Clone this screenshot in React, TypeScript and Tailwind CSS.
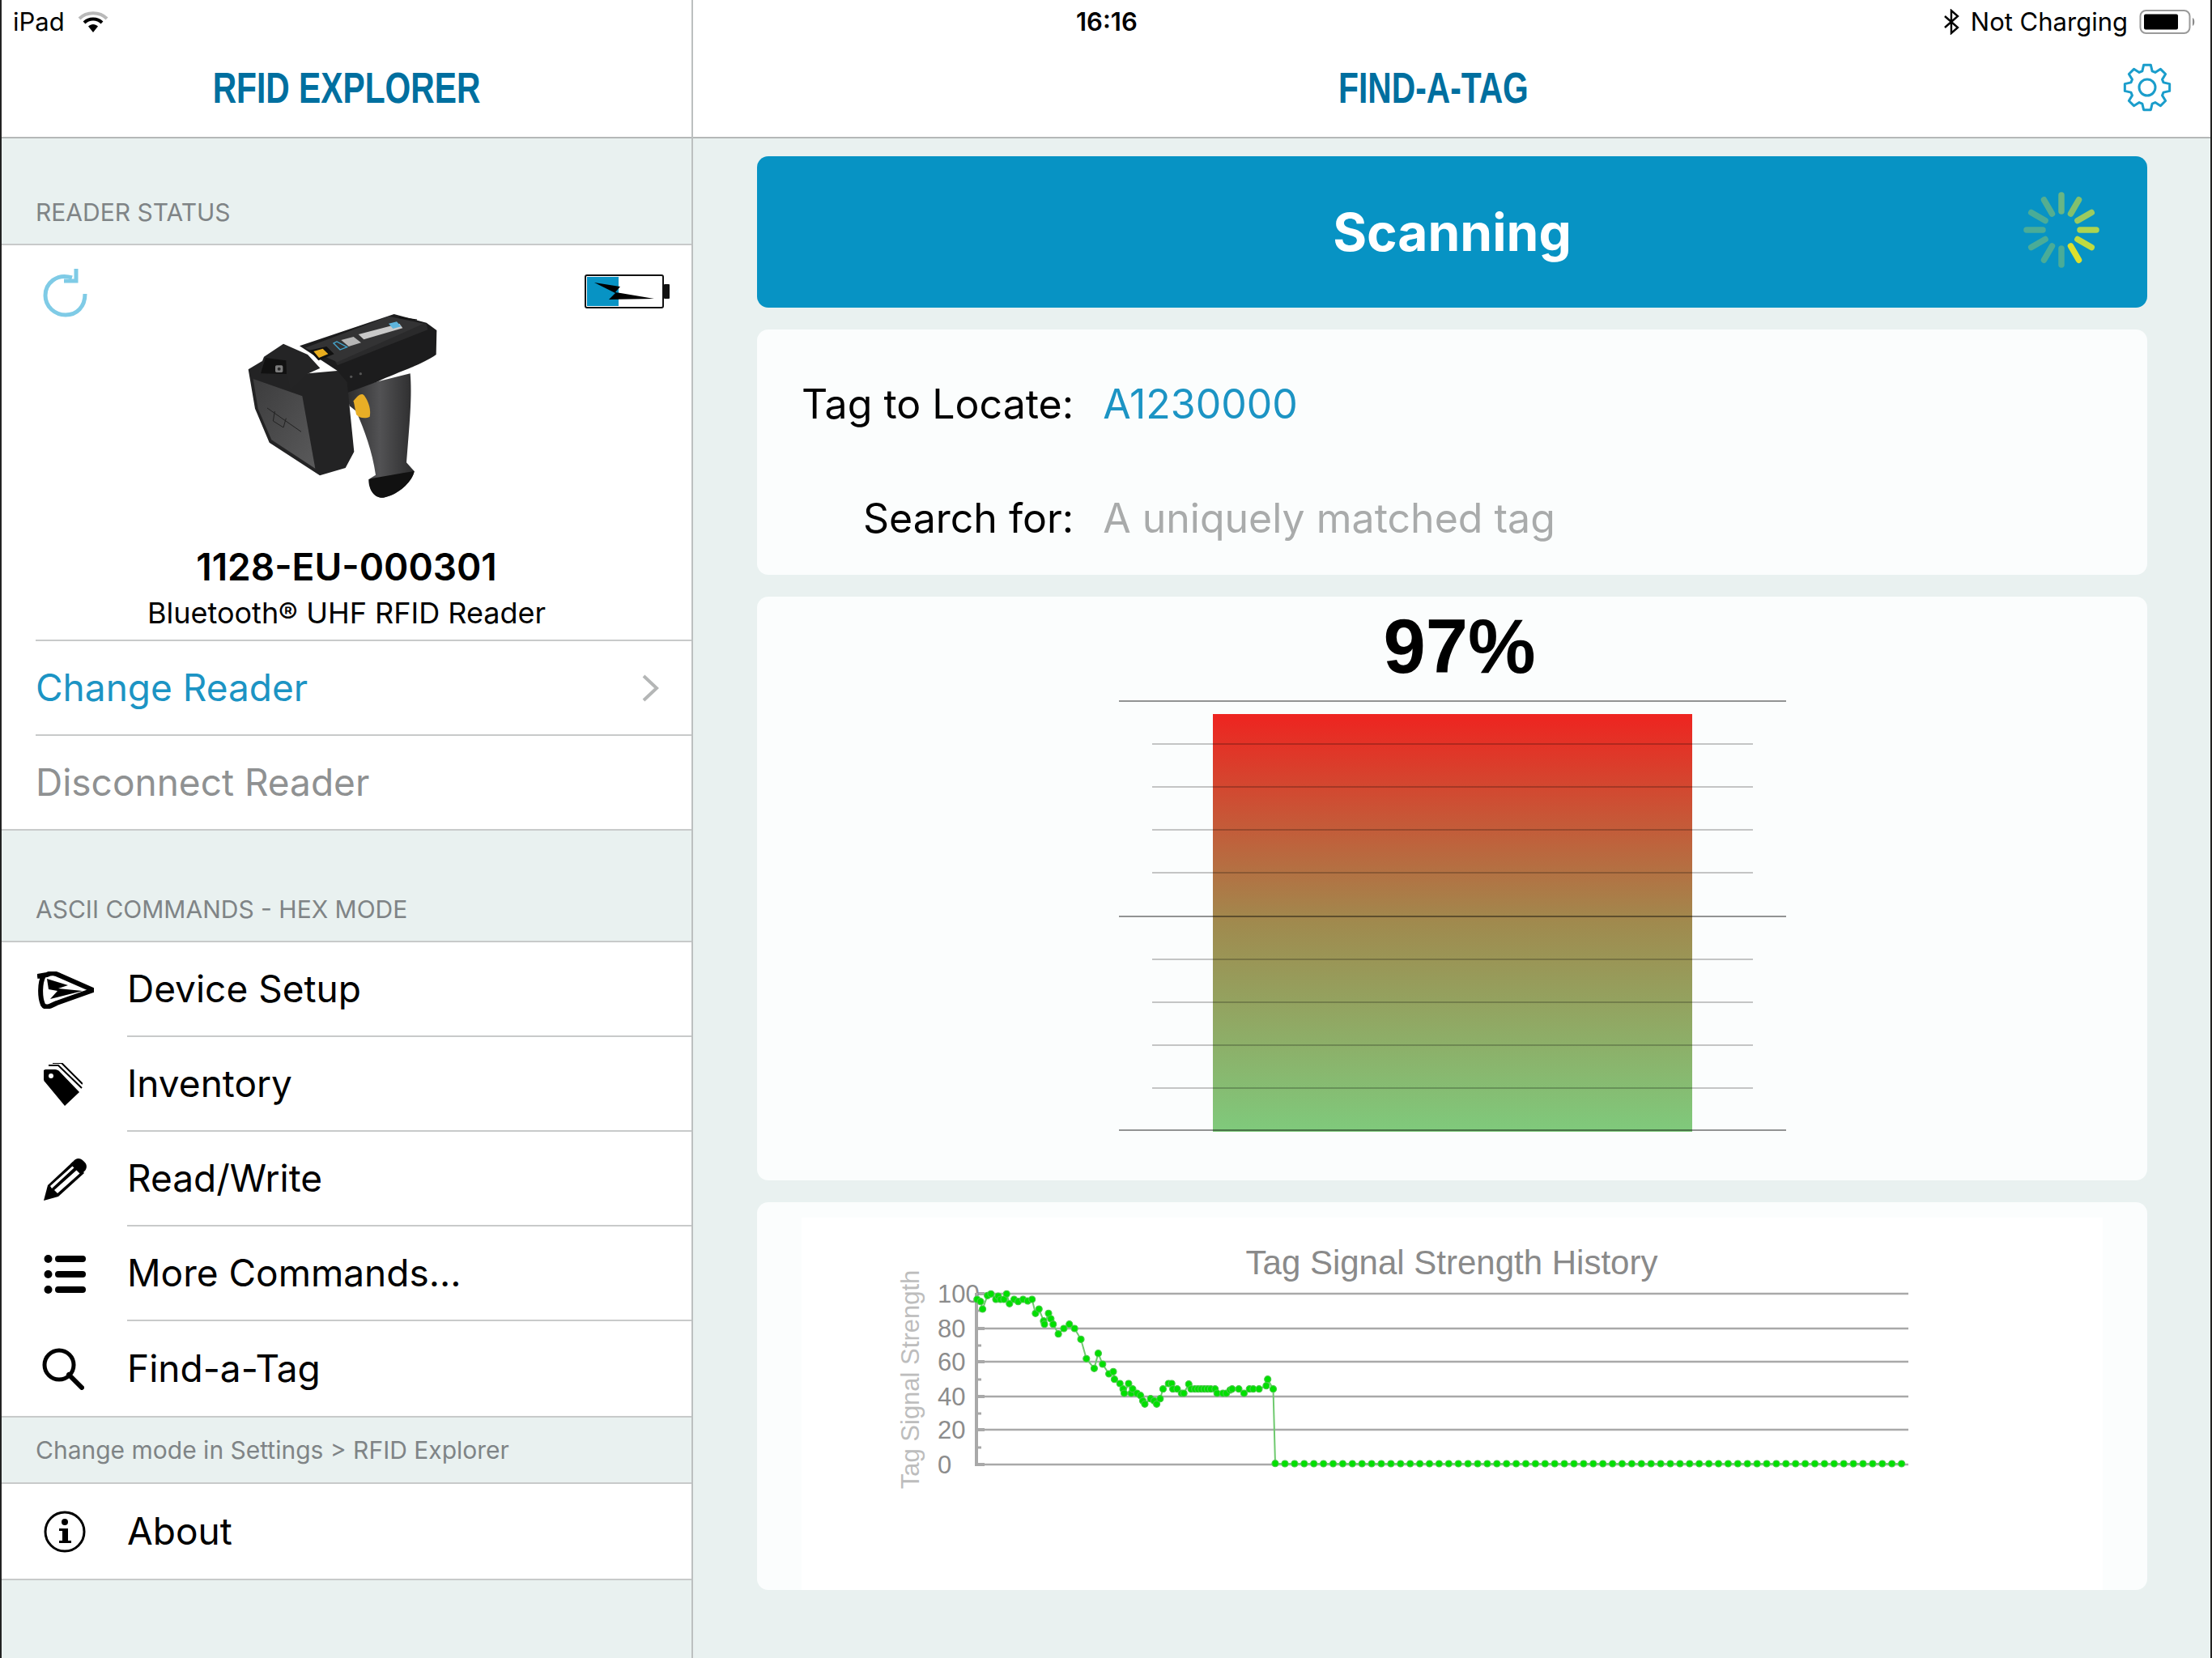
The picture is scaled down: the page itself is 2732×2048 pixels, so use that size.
const rawPoints: [number, number][] = [
  [355, 264], [367, 272], [374, 300], [391, 250], [403, 244], [420, 264], [428, 252], [436, 264], [448, 264], [457, 244],
  [467, 280], [483, 264], [497, 272], [514, 264], [530, 270], [545, 264], [557, 316], [569, 300], [585, 344], [588, 356],
  [602, 316], [610, 336], [618, 356], [636, 392], [655, 372], [674, 356], [692, 372], [714, 412], [733, 484], [760, 520],
  [774, 464], [789, 504], [811, 540], [826, 532], [830, 560], [849, 576], [860, 596], [864, 612], [879, 576], [888, 612],
  [893, 596], [908, 612], [920, 620], [928, 640], [935, 652], [955, 632], [967, 640], [976, 652], [988, 632], [998, 596],
  [1017, 576], [1028, 576], [1032, 596], [1047, 596], [1062, 612], [1070, 612], [1087, 578], [1095, 596], [1108, 596],
  [1119, 596], [1130, 596], [1141, 596], [1152, 596], [1163, 596], [1178, 596], [1185, 612], [1205, 612], [1217, 612],
  [1230, 600], [1237, 596], [1260, 596], [1278, 612], [1297, 596], [1310, 596], [1330, 596], [1355, 584], [1360, 560],
  [1379, 596], [1386, 872],
];

const signal = [
  ...rawPoints.map(([x, y]) => ({ x: 1080 + x / 2.8, y: 1520 + y / 3 })),
  ...Array.from({ length: 65 }, (_, i) => ({ x: 1587 + i * 11.9, y: 1811 })),
];

const gearPath = (() => {
  const pts: string[] = [];
  for (let i = 0; i < 8; i++) {
    const a = (i * 45 - 90) * (Math.PI / 180);
    const step = Math.PI / 180;
    const corners: [number, number][] = [
      [-17, 21],
      [-9, 28],
      [9, 28],
      [17, 21],
    ];
    corners.forEach(([d, r]) => {
      pts.push(`${(32 + r * Math.cos(a + d * step)).toFixed(2)},${(32 + r * Math.sin(a + d * step)).toFixed(2)}`);
    });
  }
  return pts.join(' ');
})();

const spinnerColors = ['#69b684', '#83c06c', '#9bcb5f', '#aed44f', '#c0da40', '#dde02d', '#4aac97', '#4aac97', '#4aac97', '#4aac97', '#4aac97', '#55ae90'];

function Wifi() {
  return (
    <svg width="38" height="28" viewBox="0 0 38 28" fill="none">
      <path d="M2 10 C11 1 27 1 36 10" stroke="#b9b9b9" strokeWidth="4" />
      <path d="M8 15 C14 9 24 9 30 15" stroke="#000" strokeWidth="4" />
      <path d="M13 19.5 C16.5 16 21.5 16 25 19.5 L19 27 Z" fill="#000" />
    </svg>
  );
}

function StatusBattery() {
  return (
    <svg width="72" height="32" viewBox="0 0 72 32" fill="none">
      <rect x="1.5" y="2" width="61" height="28" rx="7" stroke="#9a9a9a" strokeWidth="2" />
      <rect x="6" y="6.5" width="42" height="19" rx="2" fill="#000" />
      <path d="M66 11 C69 12 69 20 66 21 Z" fill="#8a8a8a" />
    </svg>
  );
}

function Gear() {
  return (
    <svg width="64" height="64" viewBox="0 0 64 64" fill="none" stroke="#1a9dcb" strokeWidth="3" strokeLinejoin="round">
      <polygon points={gearPath} />
      <circle cx="32" cy="32" r="10" />
    </svg>
  );
}

function Spinner() {
  return (
    <svg width="100" height="100" viewBox="0 0 100 100" strokeWidth="7.5" strokeLinecap="round">
      {spinnerColors.map((c, i) => (
        <line key={i} x1="50" y1="7" x2="50" y2="27" stroke={c} transform={`rotate(${i * 30} 50 50)`} />
      ))}
    </svg>
  );
}

function ReaderBattery() {
  return (
    <svg width="106" height="42" viewBox="0 0 106 42">
      <rect x="1" y="1" width="96" height="40" rx="2" fill="#fff" stroke="#111" strokeWidth="2" />
      <rect x="3" y="3" width="39" height="36" fill="#0793c4" />
      <rect x="98" y="12" width="7" height="18" rx="1" fill="#111" />
      <path d="M12 10 L44 15 L38 22 L86 30 L30 31 L38 23 Z" fill="#000" />
    </svg>
  );
}

function Scanner() {
  return (
    <svg width="320" height="270" viewBox="0 0 960 810">
      <defs>
        <linearGradient id="grip" x1="0" y1="0" x2="1" y2="0">
          <stop offset="0" stopColor="#2a2a2b" />
          <stop offset="0.5" stopColor="#525254" />
          <stop offset="1" stopColor="#2c2c2d" />
        </linearGradient>
        <linearGradient id="plate" x1="0" y1="0" x2="1" y2="1">
          <stop offset="0" stopColor="#3c3c3d" />
          <stop offset="1" stopColor="#5a5a5b" />
        </linearGradient>
      </defs>
      <path d="M500 370 L740 310 C748 400 735 520 726 640 L755 672 C750 705 700 760 640 770 C600 772 585 730 590 700 L612 686 C600 600 570 520 540 450 L515 430 Z" fill="url(#grip)" />
      <path d="M586 702 C640 690 710 680 755 672 C750 705 700 760 640 770 C600 772 585 730 586 702 Z" fill="#111" />
      <path d="M330 208 L680 90 L800 122 L838 150 L836 240 C780 280 680 310 620 340 L510 380 L500 420 L470 300 Z" fill="#1c1c1d" />
      <path d="M430 205 L680 118 L800 125 L805 148 L470 280 Z" fill="#2a2a2b" />
      <path d="M350 215 L660 98 L790 125 L470 268 Z" fill="#333334" />
      <polygon points="548,165 700,125 712,142 568,184" fill="#c9c9c9" />
      <polygon points="484,186 530,174 558,196 512,210" fill="#b5b5b5" />
      <polygon points="660,125 690,118 706,136 676,144" fill="#5eb4dc" />
      <path d="M456 198 L480 222 L506 212 L468 192 Z" fill="none" stroke="#45a7d0" strokeWidth="4" />
      <path d="M366 224 L430 210 L458 238 L400 262 Z" fill="#111" />
      <path d="M382 228 L416 218 L436 238 L402 252 Z" fill="#e8ad1e" />
      <path d="M140 295 L190 265 L360 310 L470 300 L506 342 L532 600 L500 660 L405 688 L218 566 L165 440 Z" fill="#232324" />
      <path d="M158 330 L340 394 L388 662 L226 556 L176 440 Z" fill="url(#plate)" />
      <path d="M210 438 L336 526 M238 450 L232 486 L270 510 L280 476" fill="none" stroke="#222" strokeWidth="3" />
      <path d="M178 300 L198 248 L270 200 L360 240 L406 290 L358 312 L296 372 L284 318 L182 312 Z" fill="#242425" />
      <path d="M190 296 L204 252 L280 262 L282 312 L186 310 Z" fill="#111" />
      <rect x="240" y="280" width="28" height="26" rx="5" fill="#7c7c7c" />
      <circle cx="254" cy="293" r="6" fill="#2a2a2a" />
      <path d="M530 412 C545 392 560 380 570 392 C590 420 594 450 590 470 C575 478 550 476 540 462 Z" fill="#e8ae26" />
      <circle cx="521" cy="322" r="5" fill="#555" />
      <circle cx="556" cy="311" r="5" fill="#555" />
      <rect x="698" y="100" width="68" height="4" fill="#111" transform="rotate(8 698 100)" />
    </svg>
  );
}

function DeviceSetupIcon() {
  return (
    <svg width="70" height="46" viewBox="0 0 70 46" fill="none">
      <path d="M0 6 L12 4 C18 1 22 2 28 5 L69 23 L24 39 C16 43 10 46 7 41 C3 32 3 14 8 5" stroke="#000" strokeWidth="6" strokeLinejoin="round" />
      <path d="M12 9 L38 17 L26 21 L56 24 L16 34 L25 24 L14 22 Z" fill="#000" />
    </svg>
  );
}

function TagIcon() {
  return (
    <svg width="48" height="53" viewBox="0 0 48 53" fill="none">
      <path d="M0 9 L0 20 C0 22 1 23 2 24 L26 53 L44 36 L19 10 C18 9 16 8 14 8 L2 8 Z" fill="#000" />
      <circle cx="9" cy="16" r="3" fill="#fff" />
      <path d="M6 3 L18 3 L47 31 M11 0 L22 0 L48 26" stroke="#000" strokeWidth="2" />
    </svg>
  );
}

function PencilIcon() {
  return (
    <svg width="54" height="52" viewBox="0 0 54 52">
      <path d="M0 52 L5 33 L36 4 L50 18 L18 47 Z" fill="#000" />
      <path d="M8 34 L36 9 L38 11 L10 37 Z M13 39 L41 14 L45 18 L17 43 Z" fill="#fff" />
      <path d="M36 4 C40 -1 45 -1 49 3 C54 7 54 12 50 16 L46 20 L33 7 Z" fill="#000" />
      <path d="M6 36 L15 45 L1 51 Z" fill="#000" />
    </svg>
  );
}

function ListIcon() {
  return (
    <svg width="52" height="48" viewBox="0 0 52 48" fill="#000">
      <circle cx="5.5" cy="5" r="5" />
      <circle cx="5.5" cy="24" r="5" />
      <circle cx="5.5" cy="43" r="5" />
      <rect x="14" y="1" width="38" height="8" rx="4" />
      <rect x="14" y="20" width="38" height="8" rx="4" />
      <rect x="14" y="39" width="38" height="8" rx="4" />
    </svg>
  );
}

function SearchIcon() {
  return (
    <svg width="52" height="52" viewBox="0 0 52 52" fill="none" stroke="#000">
      <circle cx="21" cy="21" r="18" strokeWidth="5" />
      <path d="M33 33 L49 49" strokeWidth="6" strokeLinecap="round" />
    </svg>
  );
}

function InfoIcon() {
  return (
    <svg width="52" height="54" viewBox="0 0 52 54" fill="none">
      <circle cx="26" cy="27" r="24" stroke="#000" strokeWidth="3" />
      <circle cx="26" cy="15" r="4" fill="#000" />
      <path d="M19 23 L30 23 L30 38 L34 38 L34 41 L19 41 L19 38 L23 38 L23 26 L19 26 Z" fill="#000" />
    </svg>
  );
}

function RefreshIcon() {
  return (
    <svg width="66" height="64" viewBox="0 0 66 64" fill="none" stroke="#7fcbe6" strokeWidth="5">
      <path d="M39 13 C20 7 6 20 6 35 C6 49 18 59 31 59 C45 59 55 49 55 33" />
      <path d="M44 2 L44 17 L29 17" />
    </svg>
  );
}

function Gauge() {
  const major = [1, 267, 531];
  const minor = [54, 107, 160, 213, 320, 373, 426, 479];
  return (
    <svg width="824" height="536" viewBox="0 0 824 536">
      <defs>
        <linearGradient id="level" x1="0" y1="0" x2="0" y2="1">
          <stop offset="0" stopColor="#ee2420" />
          <stop offset="0.5" stopColor="#a08a4e" />
          <stop offset="1" stopColor="#7fca7c" />
        </linearGradient>
      </defs>
      <rect x="116" y="17" width="592" height="516" fill="url(#level)" />
      {minor.map(y => (
        <line key={y} x1="41" x2="783" y1={y} y2={y} stroke="#000" strokeOpacity="0.22" strokeWidth="2" />
      ))}
      {major.map(y => (
        <line key={y} x1="0" x2="824" y1={y} y2={y} stroke="#000" strokeOpacity="0.42" strokeWidth="2" />
      ))}
    </svg>
  );
}

function HistoryChart() {
  const ticks = [
    { label: '100', y: 1601 },
    { label: '80', y: 1644 },
    { label: '60', y: 1685 },
    { label: '40', y: 1728 },
    { label: '20', y: 1769 },
    { label: '0', y: 1812 },
  ];
  return (
    <svg width="1608" height="460" viewBox="990 1507 1608 460" fontFamily="'Liberation Sans', sans-serif">
      <text x="1793" y="1577" textAnchor="middle" fontSize="42" fill="#8a8a8a">Tag Signal Strength History</text>
      <text x="-1707" y="1135" transform="rotate(-90)" textAnchor="middle" fontSize="31" fill="#bdbdbd">Tag Signal Strength</text>
      {ticks.map(t => (
        <g key={t.label}>
          <line x1="1206" x2="2357" y1={t.y} y2={t.y} stroke="#a9a9a9" strokeWidth="2.5" />
          <line x1="1206" x2="1216" y1={t.y} y2={t.y} stroke="#a9a9a9" strokeWidth="4" />
          <text x="1158" y={t.y + 11} fontSize="31" fill="#8c8c8c">{t.label}</text>
        </g>
      ))}
      {[1622, 1665, 1707, 1749, 1791].map(y => (
        <line key={y} x1="1206" x2="1212" y1={y} y2={y} stroke="#a9a9a9" strokeWidth="3" />
      ))}
      <line x1="1206" x2="1206" y1="1600" y2="1814" stroke="#a9a9a9" strokeWidth="4" />
      <polyline points={signal.map(p => `${p.x},${p.y}`).join(' ')} fill="none" stroke="#6fca6f" strokeWidth="2" />
      {signal.map((p, i) => (
        <circle key={i} cx={p.x} cy={p.y} r="4" fill="#00e000" stroke="#49c949" strokeWidth="1.2" />
      ))}
    </svg>
  );
}

function MenuRow({ icon, label, last }: { icon: React.ReactNode; label: string; last?: boolean }) {
  return (
    <div className="flex h-[117px] items-stretch">
      <div className="flex w-[155px] shrink-0 items-center pl-[44px]">{icon}</div>
      <div className={`flex flex-1 items-center text-[46px] text-black ${last ? '' : 'border-b-2 border-[#c8caca]'}`}>{label}</div>
    </div>
  );
}

export default function App() {
  return (
    <div className="flex h-[2048px] w-[2732px] overflow-hidden border-x-2 border-x-[#222] bg-[#e9f1f0] font-[Inter,sans-serif]">
      <aside className="flex w-[854px] shrink-0 flex-col border-r-2 border-[#bcc0c0]">
        <header className="h-[171px] shrink-0 border-b-2 border-[#b5b8b8] bg-white">
          <div className="flex h-[54px] items-center gap-[16px] pl-[14px] text-[31px] text-black">
            <span>iPad</span>
            <Wifi />
          </div>
          <div className="flex h-[108px] items-center justify-center">
            <h1 className="inline-block scale-x-[0.755] font-['Liberation_Sans',sans-serif] text-[54px] leading-none font-bold whitespace-nowrap text-[#006f9f]">RFID EXPLORER</h1>
          </div>
        </header>

        <div className="flex h-[132px] shrink-0 items-end border-b-2 border-[#c8caca] pb-[16px] pl-[42px] text-[30px] text-[#7f8486]">READER STATUS</div>

        <section className="shrink-0 bg-white">
          <div className="flex items-start">
            <div className="mt-[27px] ml-[48px]"><RefreshIcon /></div>
            <div className="mt-[55px] ml-[144px]"><Scanner /></div>
            <div className="mt-[36px] ml-[142px]"><ReaderBattery /></div>
          </div>
          <div className="mt-[44px] text-center text-[46px] leading-[56px] font-semibold text-black">1128-EU-000301</div>
          <div className="mt-[4px] h-[58px] text-center text-[36px] leading-[50px] text-black">Bluetooth® UHF RFID Reader</div>
          <div className="ml-[42px] border-t-2 border-[#c8caca]" />
          <div className="flex h-[115px] items-center justify-between pr-[40px] pl-[42px] text-[46px] text-[#1c94c4]">
            <span>Change Reader</span>
            <svg width="22" height="36" viewBox="0 0 22 36" fill="none" stroke="#b4b6b6" strokeWidth="4"><path d="M3 3 L19 18 L3 33" /></svg>
          </div>
          <div className="ml-[42px] border-t-2 border-[#c8caca]" />
          <div className="flex h-[115px] items-center pl-[42px] text-[46px] text-[#8f9192]">Disconnect Reader</div>
        </section>

        <div className="flex h-[140px] shrink-0 items-end border-y-2 border-[#c8caca] pb-[16px] pl-[42px] text-[30px] text-[#7f8486]">ASCII COMMANDS - HEX MODE</div>

        <section className="shrink-0 bg-white">
          <MenuRow icon={<DeviceSetupIcon />} label="Device Setup" />
          <MenuRow icon={<div className="pl-[8px]"><TagIcon /></div>} label="Inventory" />
          <MenuRow icon={<div className="pl-[8px]"><PencilIcon /></div>} label="Read/Write" />
          <MenuRow icon={<div className="pl-[8px]"><ListIcon /></div>} label="More Commands..." />
          <MenuRow icon={<div className="pl-[6px]"><SearchIcon /></div>} label="Find-a-Tag" last />
        </section>

        <div className="flex h-[84px] shrink-0 items-center border-y-2 border-[#c8caca] pl-[42px] text-[30px] text-[#7f8486]">Change mode in Settings &gt; RFID Explorer</div>

        <section className="shrink-0 border-b-2 border-[#c8caca] bg-white">
          <MenuRow icon={<div className="pl-[8px]"><InfoIcon /></div>} label="About" last />
        </section>
      </aside>

      <main className="flex min-w-0 flex-1 flex-col">
        <header className="h-[171px] shrink-0 border-b-2 border-[#b5b8b8] bg-white">
          <div className="flex h-[54px] items-center pr-[16px] text-[31px] text-black">
            <span className="ml-[473px] font-semibold">16:16</span>
            <div className="ml-auto flex items-center gap-[14px]">
              <svg width="20" height="32" viewBox="0 0 20 32" fill="none" stroke="#000" strokeWidth="2.4"><path d="M2 9 L18 23 L10 30 L10 2 L18 9 L2 23" /></svg>
              <span>Not Charging</span>
              <StatusBattery />
            </div>
          </div>
          <div className="flex h-[108px] items-center pr-[46px]">
            <div className="flex flex-1 justify-center pl-[64px]">
              <h2 className="inline-block scale-x-[0.755] font-['Liberation_Sans',sans-serif] text-[54px] leading-none font-bold whitespace-nowrap text-[#006f9f]">FIND-A-TAG</h2>
            </div>
            <Gear />
          </div>
        </header>

        <div className="flex flex-col gap-[27px] pt-[22px] pr-[78px] pl-[79px]">
          <div className="relative flex h-[187px] items-center justify-center rounded-[14px] bg-[#0793c4] text-[64px] font-bold text-white">
            Scanning
            <div className="absolute top-[41px] right-[56px]"><Spinner /></div>
          </div>

          <div className="grid h-[303px] grid-cols-[auto_1fr] content-start gap-x-[36px] gap-y-[41px] rounded-[14px] bg-[#fbfdfd] pt-[42px] pl-[55px] text-[50px] leading-[100px]">
            <div className="text-right text-black">Tag to Locate:</div>
            <div className="text-[#1c94c4]">A1230000</div>
            <div className="text-right text-black">Search for:</div>
            <div className="text-[#a9abab]">A uniquely matched tag</div>
          </div>

          <div className="flex h-[721px] flex-col items-center rounded-[14px] bg-[#fbfdfd]">
            <div className="h-[128px] pl-[18px] font-['Liberation_Sans',sans-serif] text-[94px] leading-[124px] font-bold text-black">97%</div>
            <Gauge />
          </div>

          <div className="h-[479px] rounded-[14px] bg-[#fbfdfd] px-[55px] pt-[19px]">
            <div className="h-[460px] bg-white"><HistoryChart /></div>
          </div>
        </div>
      </main>
    </div>
  );
}
